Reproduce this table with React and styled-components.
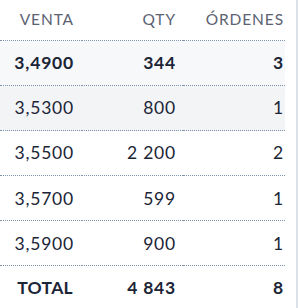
import React from 'react'
import styled, { createGlobalStyle } from 'styled-components'

const Global = createGlobalStyle`
  html, body { margin: 0; padding: 0; background: #ffffff; }
  body { font-family: Lato, "Open Sans", sans-serif; }
`

const rows = [
  { price: '3,4900', qty: '344', orders: '3', bold: true, bg: '#f7f8fa' },
  { price: '3,5300', qty: '800', orders: '1', bg: '#f3f4f6' },
  { price: '3,5500', qty: '2 200', orders: '2' },
  { price: '3,5700', qty: '599', orders: '1' },
  { price: '3,5900', qty: '900', orders: '1' },
]

const OrderBook = () => {
  return (
    <Panel>
      <Table>
        <Row $head>
          <HeadCell $pad={8}>VENTA</HeadCell>
          <HeadCell $pad={7}>QTY</HeadCell>
          <HeadCell $pad={1}>ÓRDENES</HeadCell>
        </Row>
        {rows.map((r) => (
          <Row key={r.price} $bg={r.bg}>
            <Cell $pad={8} $bold={r.bold} $num>{r.price}</Cell>
            <Cell $pad={7} $bold={r.bold} $num>{r.qty}</Cell>
            <Cell $pad={1} $bold={r.bold} $num>{r.orders}</Cell>
          </Row>
        ))}
        <Row $foot>
          <Cell $pad={9} $bold>TOTAL</Cell>
          <Cell $pad={7} $bold $num>4 843</Cell>
          <Cell $pad={1} $bold $num>8</Cell>
        </Row>
      </Table>
    </Panel>
  )
}

export default function App() {
  return (
    <>
      <Global />
      <OrderBook />
    </>
  )
}

const Panel = styled.div`
  width: 299px;
  height: 308px;
  box-sizing: border-box;
  display: flex;
  overflow: hidden;
  &::after {
    content: '';
    width: 2px;
    margin-left: 11px;
    background: #dde2ea;
  }
`

const Table = styled.div`
  width: 285px;
  display: flex;
  flex-direction: column;
`

const Row = styled.div`
  display: grid;
  grid-template-columns: 82px 101px 102px;
  height: ${(p) => (p.$head ? '41px' : p.$foot ? '42px' : '45.2px')};
  background: ${(p) => p.$bg || '#ffffff'};

  & > div {
    border-bottom: ${(p) => (p.$foot ? 'none' : '1px dotted #7d92ae')};
  }
`

const HeadCell = styled.div`
  box-sizing: border-box;
  display: flex;
  align-items: center;
  justify-content: flex-end;
  padding-right: ${(p) => p.$pad}px;
  padding-bottom: 1px;
  font-size: 15.5px;
  letter-spacing: 0.9px;
  color: #5b6272;
`

const Cell = styled.div`
  box-sizing: border-box;
  display: flex;
  align-items: center;
  justify-content: flex-end;
  padding-right: ${(p) => p.$pad}px;
  font-size: 17.5px;
  letter-spacing: ${(p) => (p.$num ? '0.8px' : '0.3px')};
  font-weight: ${(p) => (p.$bold ? 700 : 400)};
  color: #1b2536;
`
